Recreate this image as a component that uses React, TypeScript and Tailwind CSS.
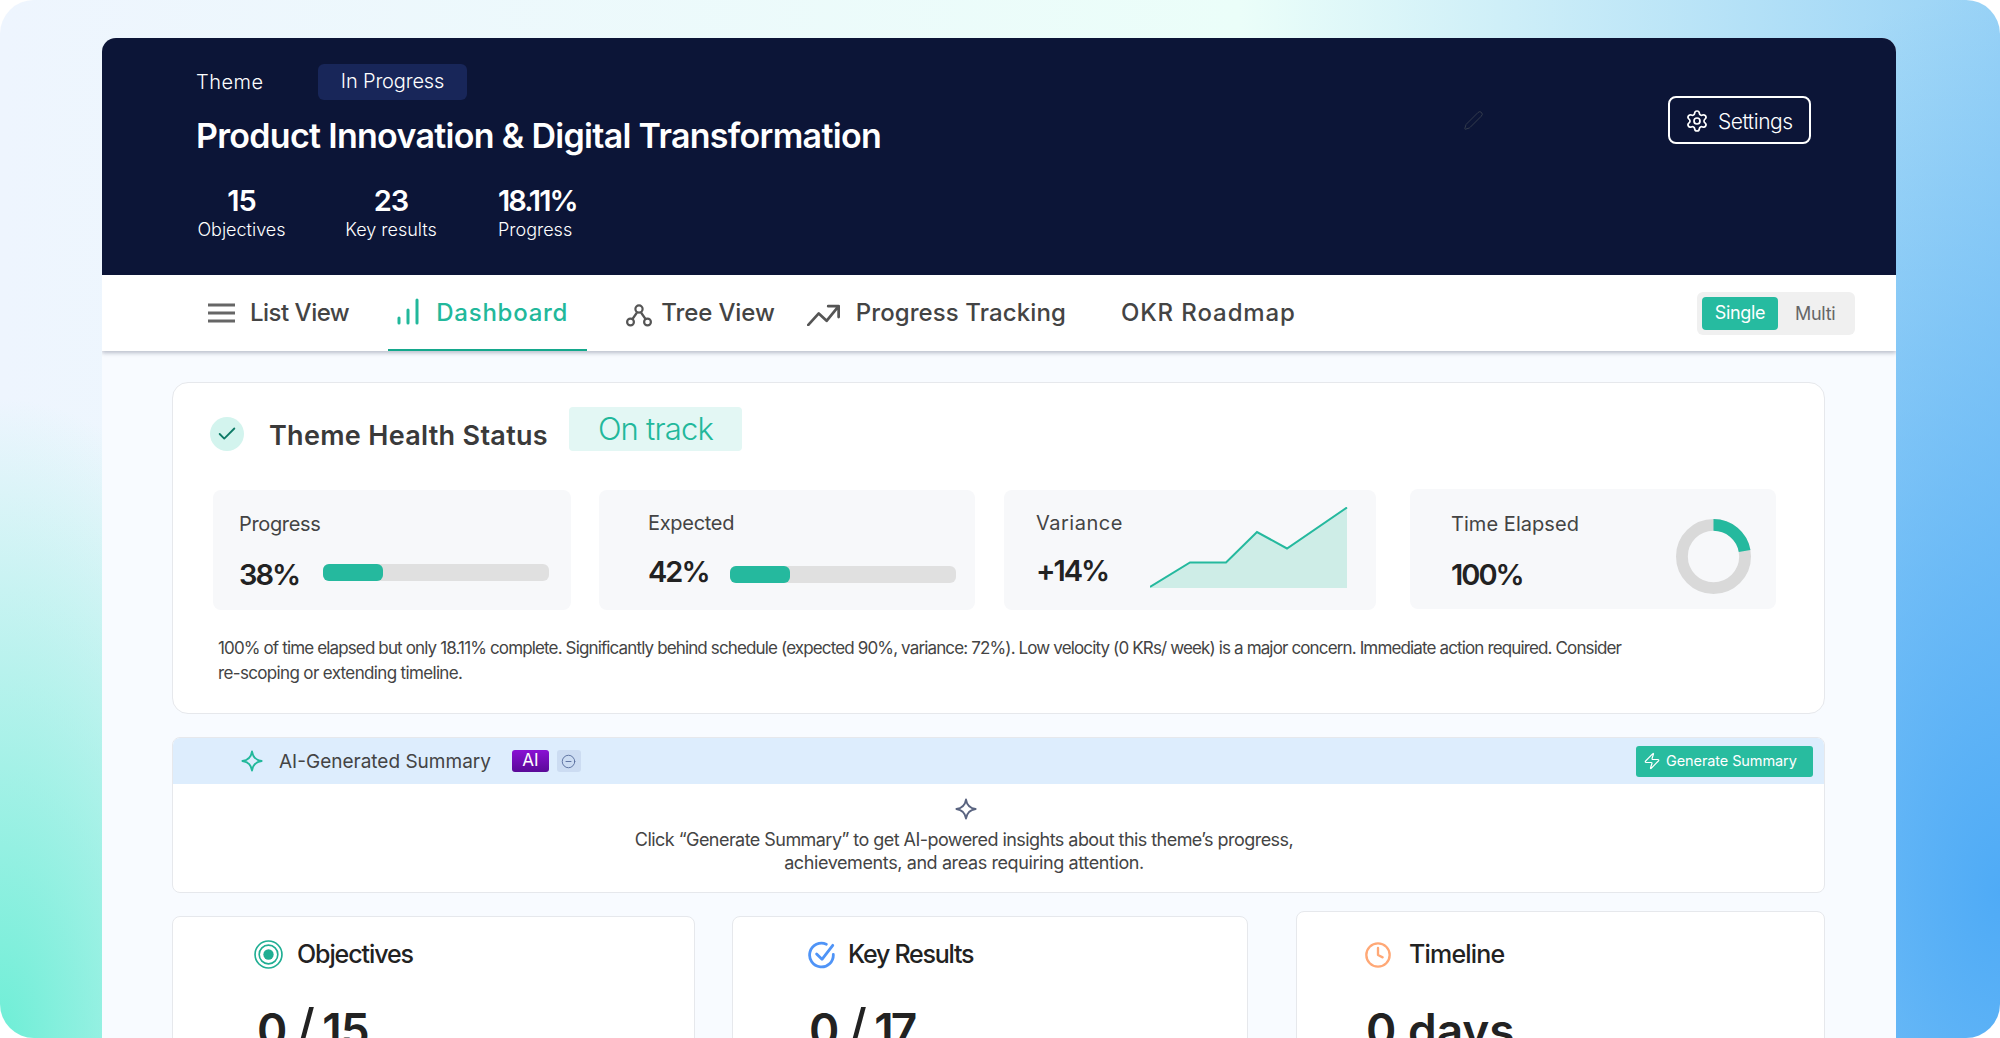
import React from "react";
import { Settings, Pen, Check, Zap, CircleMinus, Clock } from "lucide-react";

function Star({ className }: { className: string }) {
  return (
    <svg viewBox="0 0 24 24" className={className} fill="none" stroke="currentColor" strokeWidth="2" strokeLinejoin="round">
      <path d="M12 1.5 C12.9 8 16 11.1 22.5 12 C16 12.9 12.9 16 12 22.5 C11.1 16 8 12.9 1.5 12 C8 11.1 11.1 8 12 1.5 Z" />
    </svg>
  );
}

function Track({ className }: { className: string }) {
  return (
    <div className={`h-[17px] w-[226px] rounded-md bg-[#e0e0e0] ${className}`}>
      <div className="h-full w-[60px] rounded-md bg-[#25b99e]" />
    </div>
  );
}

export default function App() {
  return (
    <div className="h-[1038px] w-full overflow-hidden bg-white [font-family:Inter,sans-serif]">
      <div className="h-full overflow-hidden rounded-[34px] pl-[102px] pr-[104px] pt-[38px] bg-[radial-gradient(ellipse_340px_640px_at_0_100%,#6eeed6,transparent),radial-gradient(ellipse_520px_900px_at_100%_86%,#4fabf6,transparent),linear-gradient(90deg,#eef5fe_0%,#ebfef9_62%,#98d2f6_100%)]">
        <div className="flex h-full flex-col overflow-hidden rounded-t-[14px] bg-[#f8fbff]">
          {/* Header */}
          <header className="flex h-[237px] shrink-0 justify-between bg-[#0c1537] pl-[94px] pr-[85px] pt-[26px] text-white">
            <div>
              <div className="flex h-[36px] items-center">
                <span className="w-[66px] text-[20px] font-light tracking-[0.5px]">Theme</span>
                <span className="ml-[56px] flex h-[36px] w-[149px] items-center justify-center rounded-md bg-[#182659] pb-[3px] text-[20px] font-light tracking-[-0.15px]">In Progress</span>
              </div>
              <h1 className="mt-[14px] text-[34px] font-semibold leading-[44px] tracking-[-0.7px] whitespace-nowrap">Product Innovation &amp; Digital Transformation</h1>
              <div className="mt-[25px] flex">
                <div className="flex w-[91px] flex-col items-center">
                  <span className="text-[29px] font-semibold leading-[36px] tracking-[-1px]">15</span>
                  <span className="text-[18px] font-light leading-[22px] whitespace-nowrap">Objectives</span>
                </div>
                <div className="ml-[58px] flex w-[92px] flex-col items-center">
                  <span className="text-[29px] font-semibold leading-[36px] tracking-[-1px]">23</span>
                  <span className="text-[18px] font-light leading-[22px] whitespace-nowrap">Key results</span>
                </div>
                <div className="ml-[61px] flex flex-col items-start">
                  <span className="text-[29px] font-semibold leading-[36px] tracking-[-2px]">18.11%</span>
                  <span className="text-[18px] font-light leading-[22px]">Progress</span>
                </div>
              </div>
            </div>
            <div className="flex items-start">
              <Pen className="mt-[46px] size-[21px] text-[#3a4150]" strokeWidth={1} />
              <button className="ml-[184px] mt-[32px] flex h-[48px] w-[143px] items-center rounded-lg border-2 border-white pl-[15px] pt-[2px]">
                <Settings className="size-[24px]" strokeWidth={1.7} />
                <span className="ml-[9px] pt-[2px] text-[21px] font-light tracking-[-0.45px]">Settings</span>
              </button>
            </div>
          </header>

          {/* Nav */}
          <nav className="relative z-10 flex h-[76px] shrink-0 items-center bg-white pl-[106px] pr-[41px] text-[24px] font-medium text-[#444] shadow-[0_2px_4px_rgba(40,50,80,0.3)]">
            <svg viewBox="0 0 27 20" className="h-[20px] w-[27px]" stroke="#666" strokeWidth="3">
              <path d="M0 2h27M0 10h27M0 18h27" />
            </svg>
            <span className="ml-[15px] tracking-[-0.5px]">List View</span>
            <div className="ml-[39px] flex h-full items-center border-b-2 border-[#14a88c] pl-[9px] pr-[19px] text-[#22b89b]">
              <svg viewBox="0 0 22 27" className="mb-[2px] h-[27px] w-[22px]" stroke="#22b89b" strokeWidth="3" strokeLinecap="round">
                <path d="M2 25v-5M11 25V12M20 25V2" />
              </svg>
              <span className="ml-[17px] pt-[1px] tracking-[0.75px]">Dashboard</span>
            </div>
            <svg viewBox="0 0 26 24" className="ml-[39px] mt-[3px] h-[24px] w-[26px]" fill="none" stroke="#555" strokeWidth="2.2">
              <circle cx="13" cy="6" r="3.6" />
              <circle cx="4.5" cy="19" r="3.4" />
              <circle cx="21.5" cy="19" r="3.4" />
              <path d="M11 9.5 6.5 16M15 9.5 19.5 16" />
            </svg>
            <span className="ml-[9px] tracking-[-0.1px]">Tree View</span>
            <svg viewBox="0 0 32 22" className="ml-[32px] mt-[2px] h-[23px] w-[34px]" fill="none" stroke="#555" strokeWidth="2.6" strokeLinecap="round" strokeLinejoin="round">
              <path d="M1 21 11 10l7.5 7L30 3M20 3h10v10.5" />
            </svg>
            <span className="ml-[15px] tracking-[0.1px]">Progress Tracking</span>
            <span className="ml-[55px] tracking-[0.9px]">OKR Roadmap</span>
            <div className="ml-auto flex h-[43px] w-[158px] items-center rounded-md bg-[#f0f0f0] px-[5px] text-[18px] font-normal tracking-[-0.3px]">
              <span className="flex h-[33px] w-[76px] items-center justify-center rounded bg-[#26bba0] pb-[1px] text-white">Single</span>
              <span className="ml-[17px] text-[#666]">Multi</span>
            </div>
          </nav>

          {/* Main */}
          <main className="pl-[70px] pr-[71px] pt-[31px]">
            {/* Health */}
            <section className="h-[332px] rounded-2xl border border-[#e6e8ec] bg-white pl-[37px] pt-[24px]">
              <div className="flex items-start">
                <div className="mt-[10px] flex size-[34px] items-center justify-center rounded-full bg-[#d3f4ee]">
                  <Check className="size-[22px] text-[#0d7a66]" strokeWidth={2} />
                </div>
                <h2 className="ml-[25px] mt-[12px] text-[27px] font-semibold leading-[34px] tracking-[0.3px] text-[#3a3a3a] whitespace-nowrap">Theme Health Status</h2>
                <div className="ml-[21px] flex h-[44px] w-[173px] items-center justify-center rounded bg-[#e3f7f4] text-[31px] font-light tracking-[-0.8px] text-[#22b89b]">On track</div>
              </div>
              <div className="mt-[37px] flex items-start pl-[3px]">
                <div className="h-[120px] w-[358px] rounded-lg bg-[#f7f8fa] pl-[26px] pt-[21px]">
                  <div className="text-[20px] leading-[26px] tracking-[-0.35px] text-[#444]">Progress</div>
                  <div className="flex items-start">
                    <span className="mt-[19px] text-[29px] font-semibold leading-[38px] tracking-[-2px] text-[#222]">38%</span>
                    <Track className="ml-[24px] mt-[27px]" />
                  </div>
                </div>
                <div className="ml-[28px] h-[120px] w-[376px] rounded-lg bg-[#f7f8fa] pl-[49px] pt-[20px]">
                  <div className="text-[20px] leading-[26px] tracking-[-0.3px] text-[#444]">Expected</div>
                  <div className="flex items-start">
                    <span className="mt-[17px] text-[29px] font-semibold leading-[38px] tracking-[-2px] text-[#222]">42%</span>
                    <Track className="ml-[21px] mt-[30px]" />
                  </div>
                </div>
                <div className="ml-[29px] flex h-[120px] w-[372px] rounded-lg bg-[#f7f8fa] pl-[32px] pt-[20px]">
                  <div className="w-[114px]">
                    <div className="text-[20px] leading-[26px] tracking-[0.5px] text-[#444]">Variance</div>
                    <div className="mt-[16px] text-[29px] font-semibold leading-[38px] tracking-[-2px] text-[#222]">+14%</div>
                  </div>
                  <svg viewBox="0 0 198 81" className="mt-[-3px] h-[81px] w-[198px]">
                    <path d="M0 80 40 55.5h36L107 25l30 16.5L197 0.5V81H0Z" fill="#ceede7" />
                    <path d="M0 80 40 55.5h36L107 25l30 16.5L197 0.5" fill="none" stroke="#25b99e" strokeWidth="2" />
                  </svg>
                </div>
                <div className="ml-[34px] mt-[-1px] flex h-[120px] w-[366px] rounded-lg bg-[#f7f8fa] pl-[41px] pt-[22px]">
                  <div className="w-[200px]">
                    <div className="text-[20px] leading-[26px] tracking-[0.05px] text-[#444] whitespace-nowrap">Time Elapsed</div>
                    <div className="mt-[19px] text-[29px] font-semibold leading-[38px] tracking-[-2px] text-[#222]">100%</div>
                  </div>
                  <svg viewBox="0 0 76 76" className="ml-[25px] mt-[8px] size-[75px]">
                    <circle cx="38" cy="38" r="32" fill="none" stroke="#d9d9d9" strokeWidth="12" />
                    <path d="M38 6A32 32 0 0 1 69.5 32.4" fill="none" stroke="#25b99e" strokeWidth="12" />
                  </svg>
                </div>
              </div>
              <p className="ml-[8px] mt-[26px] text-[17px] leading-[25px] text-[#444] whitespace-nowrap">
                <span className="tracking-[-0.86px]">100% of time elapsed but only 18.11% complete. Significantly behind schedule (expected 90%, variance: 72%). Low velocity (0 KRs/ week) is a major concern. Immediate action required. Consider</span>
                <br />
                <span className="tracking-[-0.65px]">re-scoping or extending timeline.</span>
              </p>
            </section>

            {/* AI */}
            <section className="mt-[23px] h-[156px] overflow-hidden rounded-lg border border-[#e6e8ec] bg-white">
              <div className="flex h-[46px] items-center bg-[#ddedfd] pl-[68px] pr-[11px]">
                <Star className="size-[22px] text-[#22b89b]" />
                <span className="ml-[16px] pt-[2px] text-[19px] leading-[24px] text-[#444]">AI-Generated Summary</span>
                <span className="ml-[21px] flex h-[22px] w-[37px] items-center justify-center rounded-[3px] bg-gradient-to-b from-[#8a10d4] to-[#5a0a98] text-[17px] text-white">AI</span>
                <span className="ml-[8px] flex h-[22px] w-[24px] items-center justify-center rounded-[3px] bg-[#ccdcf2]">
                  <CircleMinus className="size-[15px] text-[#5a6f9e]" strokeWidth={1.5} />
                </span>
                <button className="ml-auto flex h-[31px] w-[177px] items-center rounded-[3px] bg-[#28bc9f] pl-[7px] text-[14.5px] tracking-[-0.1px] text-white">
                  <Zap className="size-[18px]" strokeWidth={1.6} />
                  <span className="ml-[5px]">Generate Summary</span>
                </button>
              </div>
              <div className="flex flex-col items-center pr-[69px] pt-[14px] text-center text-[18px] leading-[23px] text-[#444]">
                <Star className="ml-[4px] size-[22px] text-[#5a6480]" />
                <p className="mt-[8px]">
                  <span className="tracking-[-0.55px]">Click “Generate Summary” to get AI-powered insights about this theme’s progress,</span>
                  <br />
                  <span className="tracking-[-0.4px]">achievements, and areas requiring attention.</span>
                </p>
              </div>
            </section>

            {/* Cards */}
            <div className="mt-[23px] flex items-start">
              <section className="h-[200px] w-[523px] rounded-lg border border-[#e6e8ec] bg-white pl-[81px] pt-[19px]">
                <div className="flex items-center">
                  <svg viewBox="0 0 28 28" className="size-[29px]" fill="none">
                    <circle cx="14" cy="14" r="13" stroke="#1fae93" strokeWidth="1.6" />
                    <circle cx="14" cy="14" r="9" stroke="#1fae93" strokeWidth="1.6" />
                    <circle cx="14" cy="14" r="5" fill="#1fae93" />
                  </svg>
                  <span className="ml-[14px] text-[25px] font-medium tracking-[-1.1px] text-[#222]">Objectives</span>
                </div>
                <div className="ml-[3px] mt-[28px] flex items-center text-[46px] font-semibold leading-[56px] tracking-[-1px] text-[#222]">
                  <span>0</span>
                  <span className="mx-[8px] text-[58px] font-normal leading-[56px]">/</span>
                  <span>15</span>
                </div>
              </section>
              <section className="ml-[37px] h-[200px] w-[516px] rounded-lg border border-[#e6e8ec] bg-white pl-[75px] pt-[19px]">
                <div className="flex items-center">
                  <svg viewBox="0 0 26 26" className="size-[28px]" fill="none" stroke="#4f94f7" strokeWidth="2.6" strokeLinecap="round" strokeLinejoin="round">
                    <path d="M23.5 12.5A11 11 0 1 1 17 3" />
                    <path d="M8 12l5 5 10-13" />
                  </svg>
                  <span className="ml-[12px] text-[25px] font-medium tracking-[-1.25px] text-[#222]">Key Results</span>
                </div>
                <div className="ml-[1px] mt-[28px] flex items-center text-[46px] font-semibold leading-[56px] tracking-[-1px] text-[#222]">
                  <span>0</span>
                  <span className="mx-[8px] text-[58px] font-normal leading-[56px]">/</span>
                  <span className="tracking-[-3px]">17</span>
                </div>
              </section>
              <section className="ml-[48px] mt-[-5px] h-[205px] w-[529px] rounded-lg border border-[#e6e8ec] bg-white pl-[67px] pt-[24px]">
                <div className="flex items-center">
                  <Clock className="size-[28px] text-[#ffa876]" strokeWidth={2} />
                  <span className="ml-[17px] text-[25px] font-medium tracking-[-0.8px] text-[#222]">Timeline</span>
                </div>
                <div className="ml-[2px] mt-[28px] text-[46px] font-semibold leading-[56px] text-[#222]">0 days</div>
              </section>
            </div>
          </main>
        </div>
      </div>
    </div>
  );
}
